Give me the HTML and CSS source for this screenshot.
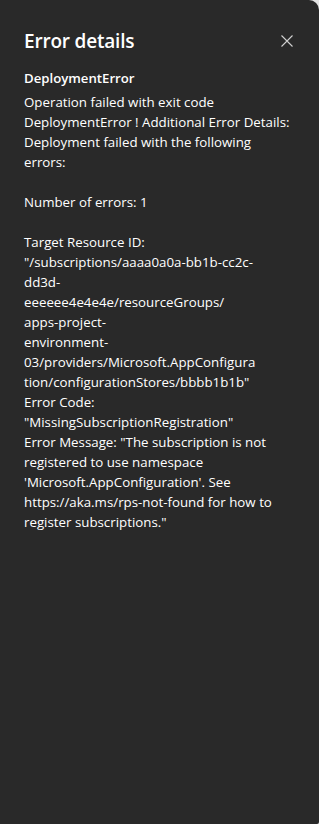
FILE: index.html
```html
<!DOCTYPE html>
<html lang="en">
<head>
<meta charset="utf-8">
<link rel="stylesheet" href="styles.css">
</head>
<body>
<div class="panel">
  <div class="header">
    <h1 class="title">Error details</h1>
    <button class="close" aria-label="Close">
      <svg width="14" height="14" viewBox="0 0 14 14"><path d="M1.5 1.5L12.5 12.5M12.5 1.5L1.5 12.5" stroke="#d0d0d0" stroke-width="1.1" fill="none"/></svg>
    </button>
  </div>
  <div class="body">
    <div class="code">DeploymentError</div>
    <div class="message">Operation failed with exit code DeploymentError ! Additional Error Details: Deployment failed with the following errors:

Number of errors: 1

Target Resource ID: "/subscriptions/aaaa0a0a-bb1b-cc2c-<br>dd3d-<br>eeeeee4e4e4e/resourceGroups/<br>apps-project-<br>environment-<br>03/providers/Microsoft.AppConfigura<br>tion/configurationStores/bbbb1b1b"
Error Code: "MissingSubscriptionRegistration"
Error Message: "The subscription is not registered to use namespace 'Microsoft.AppConfiguration'. See https://aka.ms/rps-not-found for how to register subscriptions."</div>
  </div>
</div>
</body>
</html>
```
FILE: styles.css
```css
html, body {
  margin: 0;
  padding: 0;
  background: #e4e4e4;
  height: 100%;
}
.panel {
  box-sizing: border-box;
  height: 824px;
  background: #292929;
  border-top-right-radius: 10px;
  border-bottom-right-radius: 2px;
  padding: 27px 24px 0 24px;
  font-family: "Open Sans", "Noto Sans", sans-serif;
  color: #ffffff;
}
.header {
  display: flex;
  align-items: center;
  justify-content: space-between;
}
.title {
  margin: 0;
  font-size: 19px;
  font-weight: 600;
  line-height: 28px;
  letter-spacing: -0.2px;
}
.close {
  background: none;
  border: 0;
  padding: 0;
  margin-right: 1px;
  width: 14px;
  height: 14px;
  display: flex;
  align-items: center;
  justify-content: center;
}
.body {
  margin-top: 13px;
}
.code {
  font-size: 13.2px;
  font-weight: 600;
  line-height: 20px;
}
.message {
  margin-top: 4px;
  font-size: 13.3px;
  line-height: 20px;
  white-space: pre-line;
  overflow-wrap: anywhere;
}
```
